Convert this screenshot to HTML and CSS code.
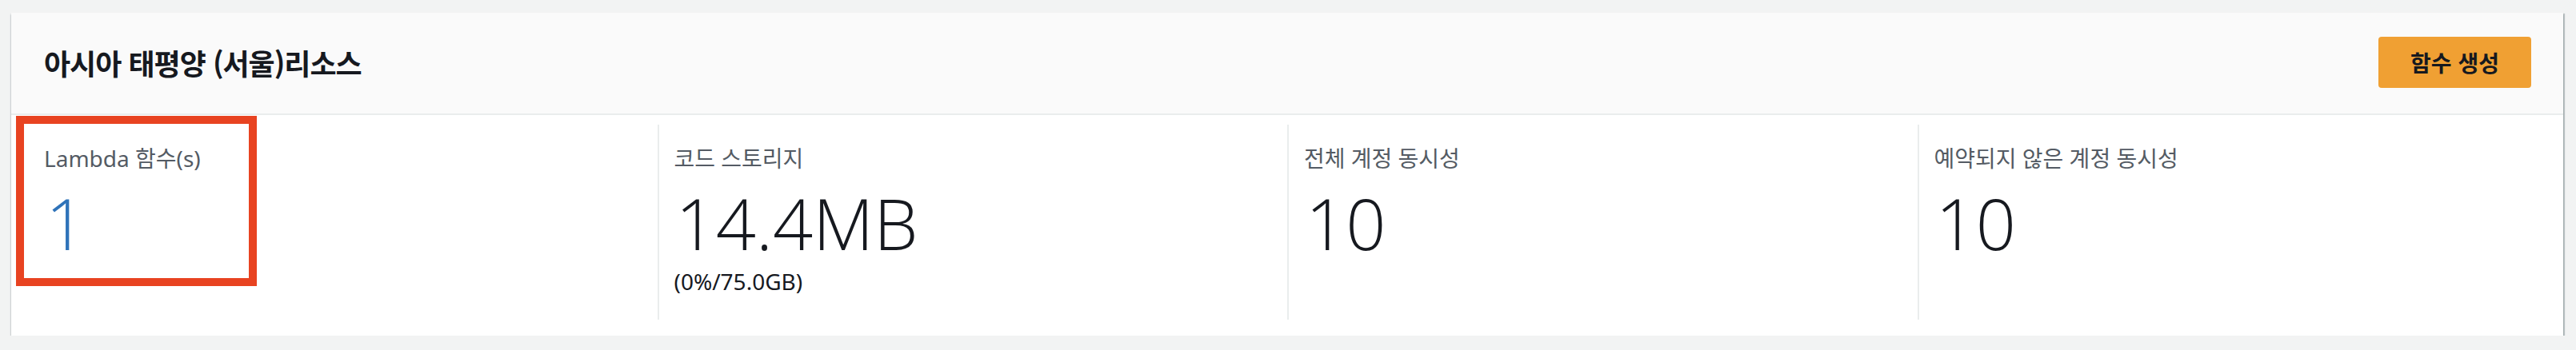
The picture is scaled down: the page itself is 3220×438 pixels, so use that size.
FILE: index.html
```html
<!DOCTYPE html>
<html lang="ko">

<head>
    <meta charset="UTF-8">
    <meta name="viewport" content="width=device-width, initial-scale=1.0">
    <title>Lambda 리소스</title>
    <link rel="stylesheet" href="styles.css">
</head>

<body>
    <div class="card">
        <div class="card-head">
            <h2>아시아 태평양 (서울)리소스</h2>
            <button class="btn-primary">함수 생성</button>
        </div>
        <div class="card-body">
            <div class="col">
                <div class="label">Lambda 함수(s)</div>
                <div class="value link">1</div>
            </div>
            <div class="col">
                <div class="label">코드 스토리지</div>
                <div class="value">14.4MB</div>
                <div class="sub">(0%/75.0GB)</div>
            </div>
            <div class="col">
                <div class="label">전체 계정 동시성</div>
                <div class="value">10</div>
            </div>
            <div class="col">
                <div class="label">예약되지 않은 계정 동시성</div>
                <div class="value">10</div>
            </div>
        </div>
        <!-- red highlight box over the first stat -->
        <div class="mark"></div>
    </div>
</body>

</html>
```

FILE: styles.css
```css
* {
    margin: 0;
    padding: 0;
    box-sizing: border-box;
}

html,
body {
    overflow: hidden;
}

body {
    background-color: #f2f3f3;
    font-family: 'Noto Sans', 'Noto Sans CJK KR', sans-serif;
    color: #16191f;
    padding: 16px 16px 0 14px;
}

.card {
    position: relative;
    background-color: #fff;
    box-shadow: 0 2px 2px 0 rgba(0, 28, 36, 0.45), 2px 1px 1px 0 rgba(0, 28, 36, 0.2);
}

.card-head {
    display: flex;
    justify-content: space-between;
    align-items: center;
    background-color: #fafafa;
    border-bottom: 2px solid #eaeded;
    padding: 30px 40px 32px 41px;
}

h2 {
    font-family: 'Noto Sans CJK KR', sans-serif;
    font-size: 36px;
    font-weight: 700;
    letter-spacing: -1px;
    color: #16191f;
}

.btn-primary {
    font-family: 'Noto Sans CJK KR', sans-serif;
    font-size: 28px;
    font-weight: 700;
    color: #16191f;
    background-color: #f0a033;
    border: none;
    border-radius: 4px;
    width: 191px;
    height: 64px;
}

.card-body {
    display: grid;
    grid-template-columns: repeat(4, 1fr);
    padding: 12px 20px 20px;
}

.col {
    border-left: 2px solid #eaeded;
    padding: 22px 20px 0 19px;
    height: 244px;
}

.col:first-child {
    border-left-color: transparent;
}

.label {
    font-size: 28px;
    line-height: 40px;
    color: #545b64;
}

.value {
    font-family: 'Open Sans', 'Noto Sans', sans-serif;
    font-weight: 300;
    font-size: 88px;
    line-height: 110px;
    margin: 6px 0 0 2px;
    color: #16191f;
}

.link {
    color: #2f73b9;
}

.sub {
    font-size: 28px;
    line-height: 36px;
    color: #16191f;
}

.mark {
    position: absolute;
    left: 6px;
    top: 129px;
    width: 301px;
    height: 213px;
    border: 10px solid #e84321;
}
```
